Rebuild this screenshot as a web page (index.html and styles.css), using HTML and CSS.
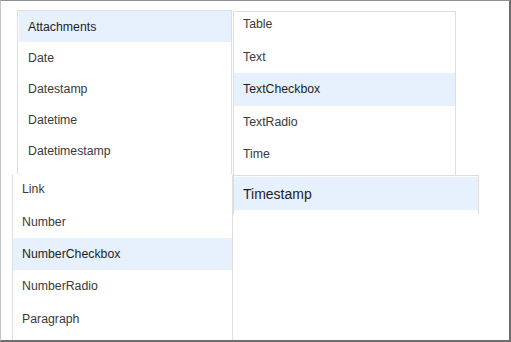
FILE: index.html
```html
<!DOCTYPE html>
<html lang="en">
<head>
<meta charset="utf-8">
<title>Menus</title>
<link rel="stylesheet" href="styles.css">
</head>
<body>
<div class="frame">
  <div class="menu menu-a">
    <ul class="list rows-a">
      <li class="item active">Attachments</li>
      <li class="item">Date</li>
      <li class="item">Datestamp</li>
      <li class="item">Datetime</li>
      <li class="item">Datetimestamp</li>
    </ul>
  </div>
  <div class="menu menu-b">
    <ul class="list rows-b">
      <li class="item">Table</li>
      <li class="item">Text</li>
      <li class="item active">TextCheckbox</li>
      <li class="item">TextRadio</li>
      <li class="item">Time</li>
    </ul>
  </div>
  <div class="menu menu-c">
    <ul class="list rows-c">
      <li class="item">Link</li>
      <li class="item">Number</li>
      <li class="item active">NumberCheckbox</li>
      <li class="item">NumberRadio</li>
      <li class="item">Paragraph</li>
    </ul>
  </div>
  <div class="menu menu-d">
    <ul class="list rows-d">
      <li class="item active">Timestamp</li>
    </ul>
  </div>
</div>
</body>
</html>
```

FILE: styles.css
```css
html, body {
  margin: 0;
  padding: 0;
  background: #ffffff;
}

.frame {
  position: relative;
  box-sizing: border-box;
  width: 511px;
  height: 342px;
  overflow: hidden;
  background: #ffffff;
  border-top: 1px solid #8e8e8e;
  border-left: 1px solid #c4c4c4;
  border-right: 2px solid #6e6e6e;
  border-bottom: 2px solid #6e6e6e;
  font-family: "Liberation Sans", Arial, sans-serif;
  font-size: 12.3px;
  color: #3a3a3a;
}

.menu {
  position: absolute;
  box-sizing: border-box;
  background: #ffffff;
  border: 1px solid #dedede;
  overflow: hidden;
}

.list {
  list-style: none;
  margin: 0;
  padding: 0;
}

.item {
  display: flex;
  align-items: center;
  padding-left: 9px;
  white-space: nowrap;
}

.item.active {
  background: #e7f1fd;
  color: #1e1e1e;
}

.menu-a {
  left: 16px;
  top: 9px;
  width: 215px;
  height: 170px;
  padding-left: 1px;
  z-index: 1;
}
.rows-a .item { height: 31.2px; }

.menu-b {
  left: 232px;
  top: 10px;
  width: 223px;
  height: 166px;
  z-index: 1;
}
.rows-b { margin-top: -4px; }
.rows-b .item { height: 32.5px; }

.menu-c {
  left: 11px;
  top: 173px;
  width: 221px;
  height: 200px;
  border-top-color: #ffffff;
  z-index: 2;
}
.rows-c { margin-top: -2px; }
.rows-c .item { height: 32.4px; }

.menu-d {
  left: 232px;
  top: 174px;
  width: 246px;
  height: 39px;
  border-bottom: none;
  padding-top: 1px;
  z-index: 3;
}
.rows-d .item {
  height: 33px;
  font-size: 14px;
  color: #1e1e1e;
}
```
